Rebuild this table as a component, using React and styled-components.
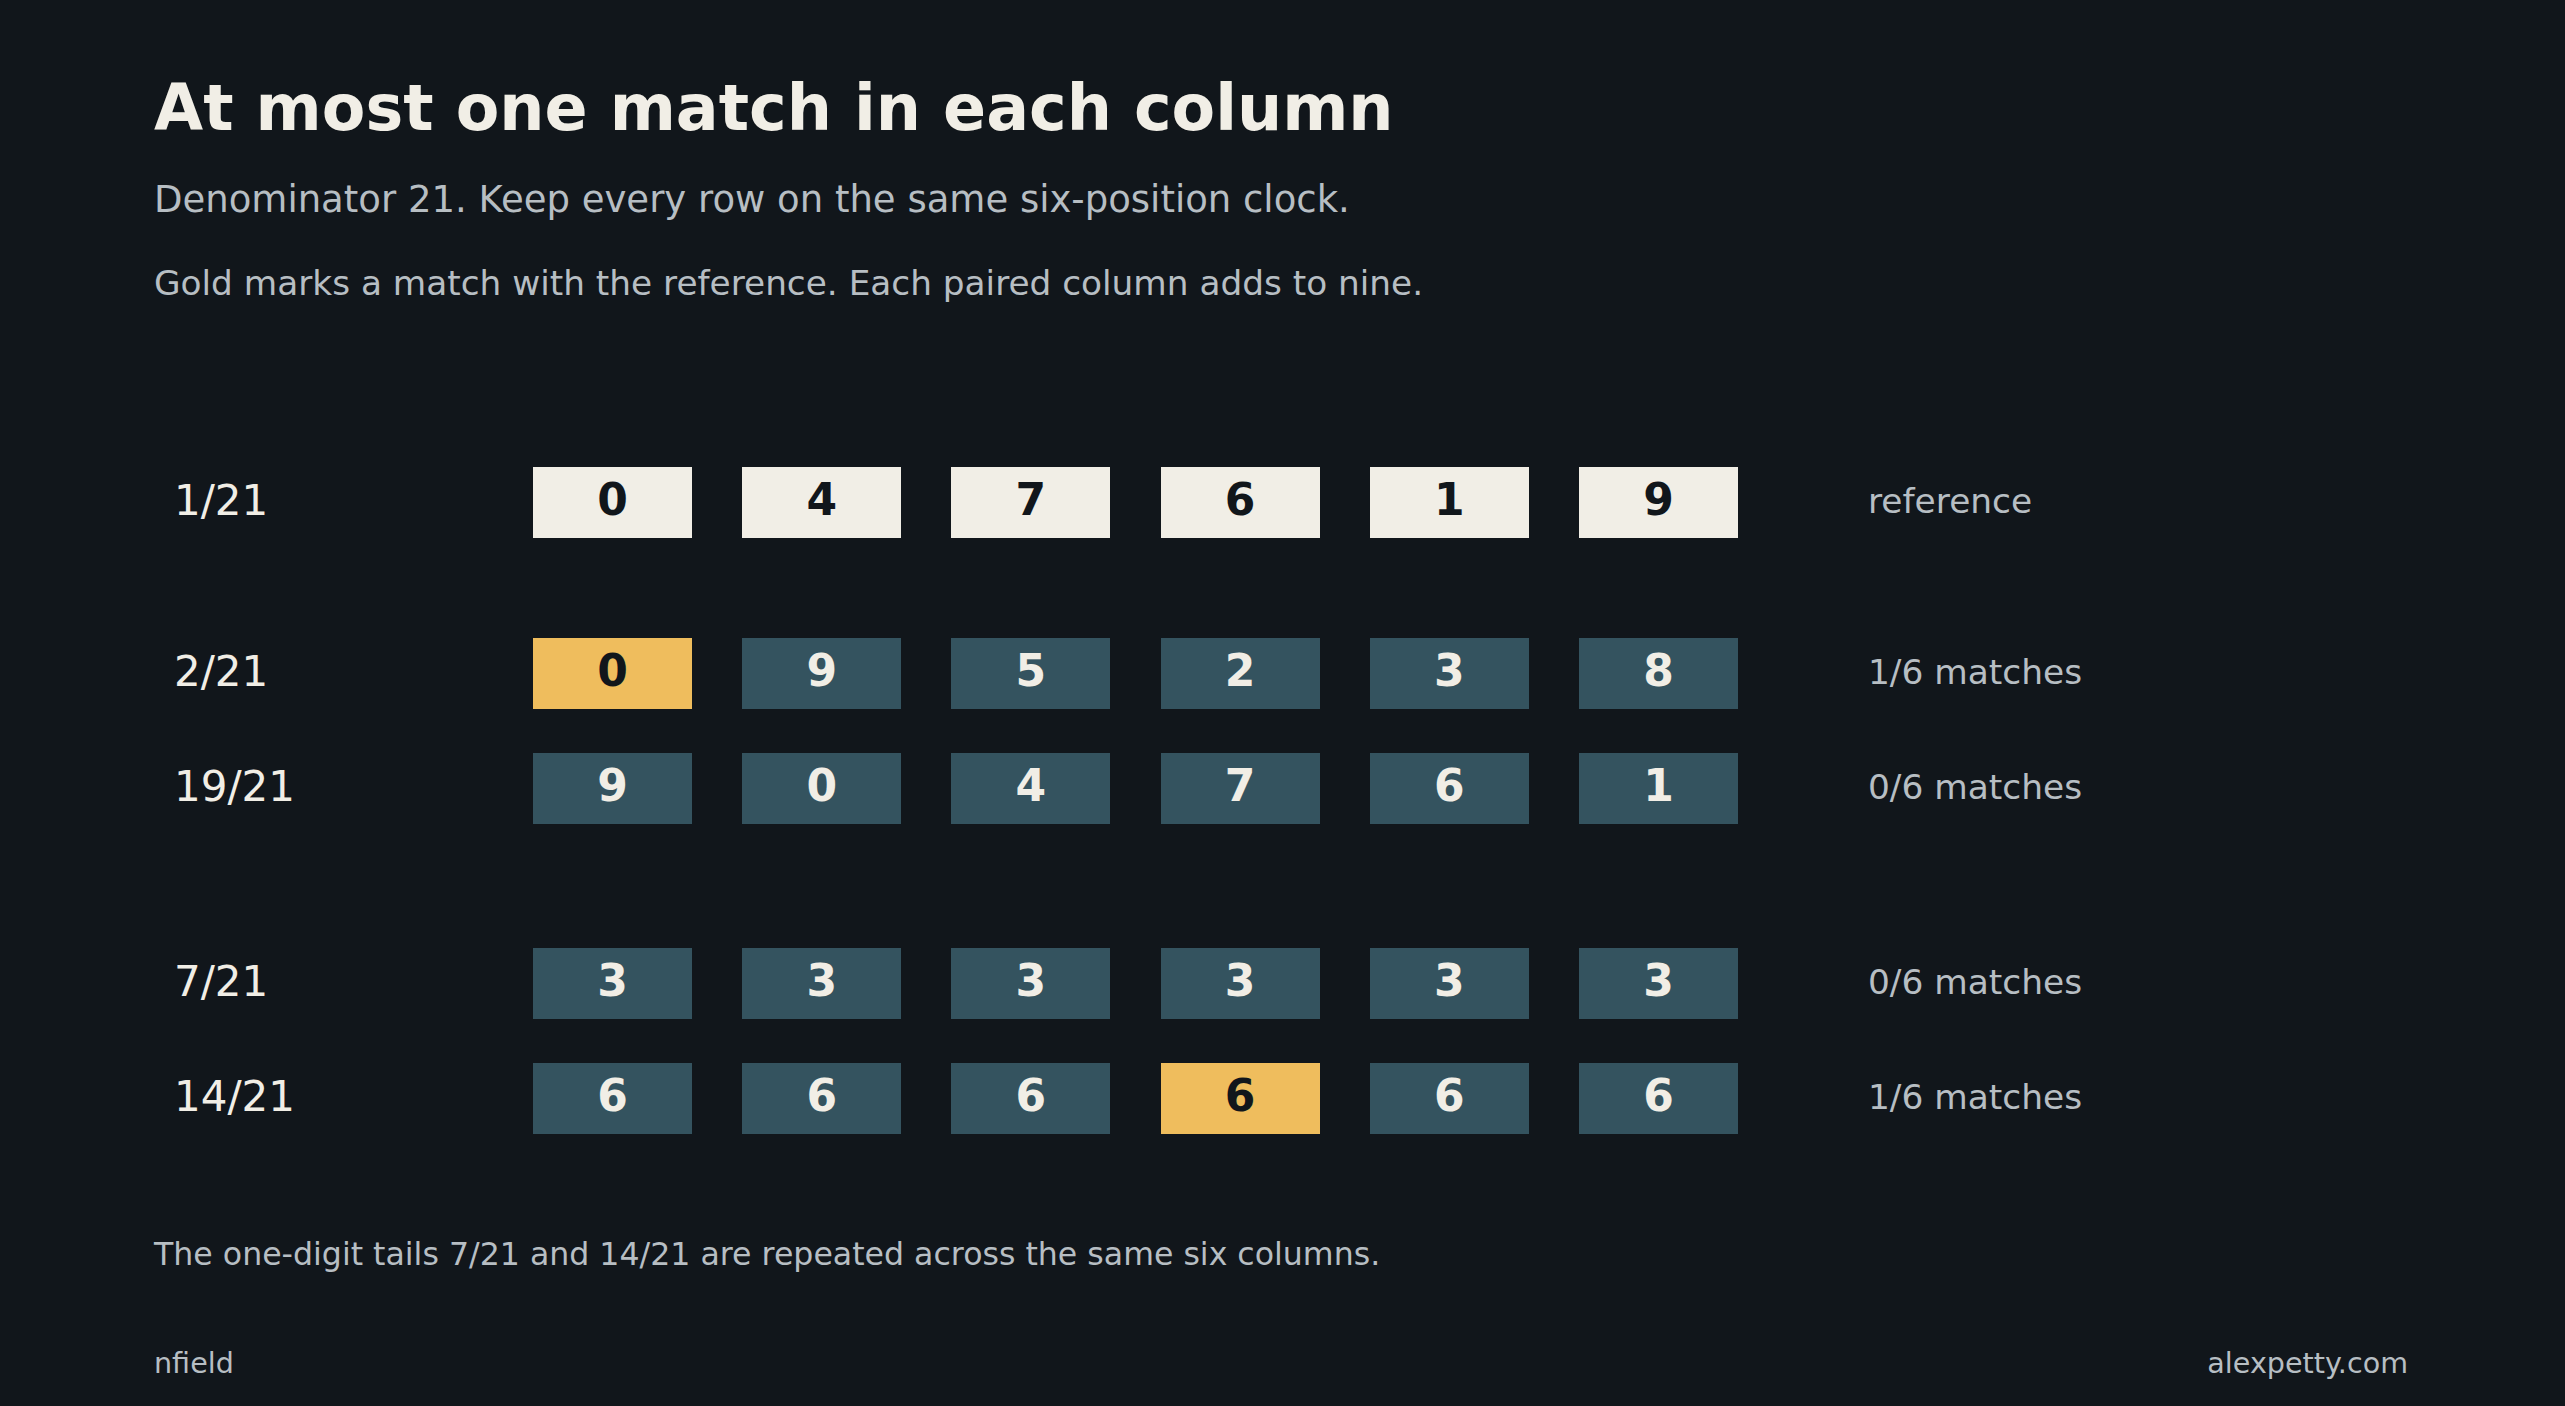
import React from "react";
import styled, { createGlobalStyle } from "styled-components";

const GlobalStyle = createGlobalStyle`
  html, body {
    margin: 0;
    padding: 0;
    background: #11161b;
  }
  body {
    font-family: "DejaVu Sans", "Liberation Sans", sans-serif;
  }
`;

const Page = styled.main`
  width: 2565px;
  height: 1406px;
  box-sizing: border-box;
  padding: 77px 157px 0 154px;
  display: flex;
  flex-direction: column;
  background: #11161b;
  color: #f1eee6;
  overflow: hidden;
`;

const Title = styled.h1`
  margin: 0;
  font-size: 63.5px;
  line-height: 1;
  font-weight: 700;
  color: #f1eee6;
`;

const Subtitle = styled.p`
  margin: 40px 0 0;
  font-size: 37px;
  line-height: 1;
  color: #b7bec3;
`;

const Caption = styled.p`
  margin: 48px 0 0;
  font-size: 34.3px;
  line-height: 1;
  color: #b7bec3;
`;

const Group = styled.section`
  display: flex;
  flex-direction: column;
  gap: 44px;
  margin-top: ${(p) => p.$gap}px;
`;

const Row = styled.div`
  display: flex;
  align-items: center;
  height: 71px;
`;

const Label = styled.div`
  width: 379px;
  box-sizing: border-box;
  padding: 0 0 3px 20px;
  font-size: 42px;
  line-height: 1;
  color: #f1eee6;
`;

const Cells = styled.div`
  display: flex;
  gap: 50.2px;
`;

const palette = {
  ref: { bg: "#f1eee6", fg: "#11161b" },
  match: { bg: "#efbd5d", fg: "#11161b" },
  plain: { bg: "#34535f", fg: "#f1eee6" },
};

const Cell = styled.div`
  width: 159px;
  height: 71px;
  box-sizing: border-box;
  padding-bottom: 4px;
  display: flex;
  align-items: center;
  justify-content: center;
  background: ${(p) => palette[p.$kind].bg};
  color: ${(p) => palette[p.$kind].fg};
  font-weight: 700;
  font-size: 44px;
  line-height: 1;
`;

const Note = styled.div`
  margin-left: 130px;
  padding-bottom: 3px;
  font-size: 34.4px;
  line-height: 1;
  color: #b7bec3;
`;

const Footnote = styled.p`
  margin: 105px 0 0;
  font-size: 31.6px;
  line-height: 1;
  color: #b7bec3;
`;

const Credits = styled.footer`
  margin-top: 79px;
  display: flex;
  justify-content: space-between;
  font-size: 28.6px;
  line-height: 1;
  color: #b7bec3;
`;

const groups = [
  {
    gap: 167,
    rows: [{ label: "1/21", digits: [0, 4, 7, 6, 1, 9], ref: true, note: "reference" }],
  },
  {
    gap: 100,
    rows: [
      { label: "2/21", digits: [0, 9, 5, 2, 3, 8], match: [0], note: "1/6 matches" },
      { label: "19/21", digits: [9, 0, 4, 7, 6, 1], match: [], note: "0/6 matches" },
    ],
  },
  {
    gap: 124,
    rows: [
      { label: "7/21", digits: [3, 3, 3, 3, 3, 3], match: [], note: "0/6 matches" },
      { label: "14/21", digits: [6, 6, 6, 6, 6, 6], match: [3], note: "1/6 matches" },
    ],
  },
];

export default function App() {
  return (
    <>
      <GlobalStyle />
      <Page>
        <Title>At most one match in each column</Title>
        <Subtitle>Denominator 21. Keep every row on the same six-position clock.</Subtitle>
        <Caption>Gold marks a match with the reference. Each paired column adds to nine.</Caption>
        {groups.map((g, gi) => (
          <Group key={gi} $gap={g.gap}>
            {g.rows.map((r) => (
              <Row key={r.label}>
                <Label>{r.label}</Label>
                <Cells>
                  {r.digits.map((d, i) => (
                    <Cell
                      key={i}
                      $kind={r.ref ? "ref" : r.match.includes(i) ? "match" : "plain"}
                    >
                      {d}
                    </Cell>
                  ))}
                </Cells>
                <Note>{r.note}</Note>
              </Row>
            ))}
          </Group>
        ))}
        <Footnote>
          The one-digit tails 7/21 and 14/21 are repeated across the same six columns.
        </Footnote>
        <Credits>
          <span>nfield</span>
          <span>alexpetty.com</span>
        </Credits>
      </Page>
    </>
  );
}
